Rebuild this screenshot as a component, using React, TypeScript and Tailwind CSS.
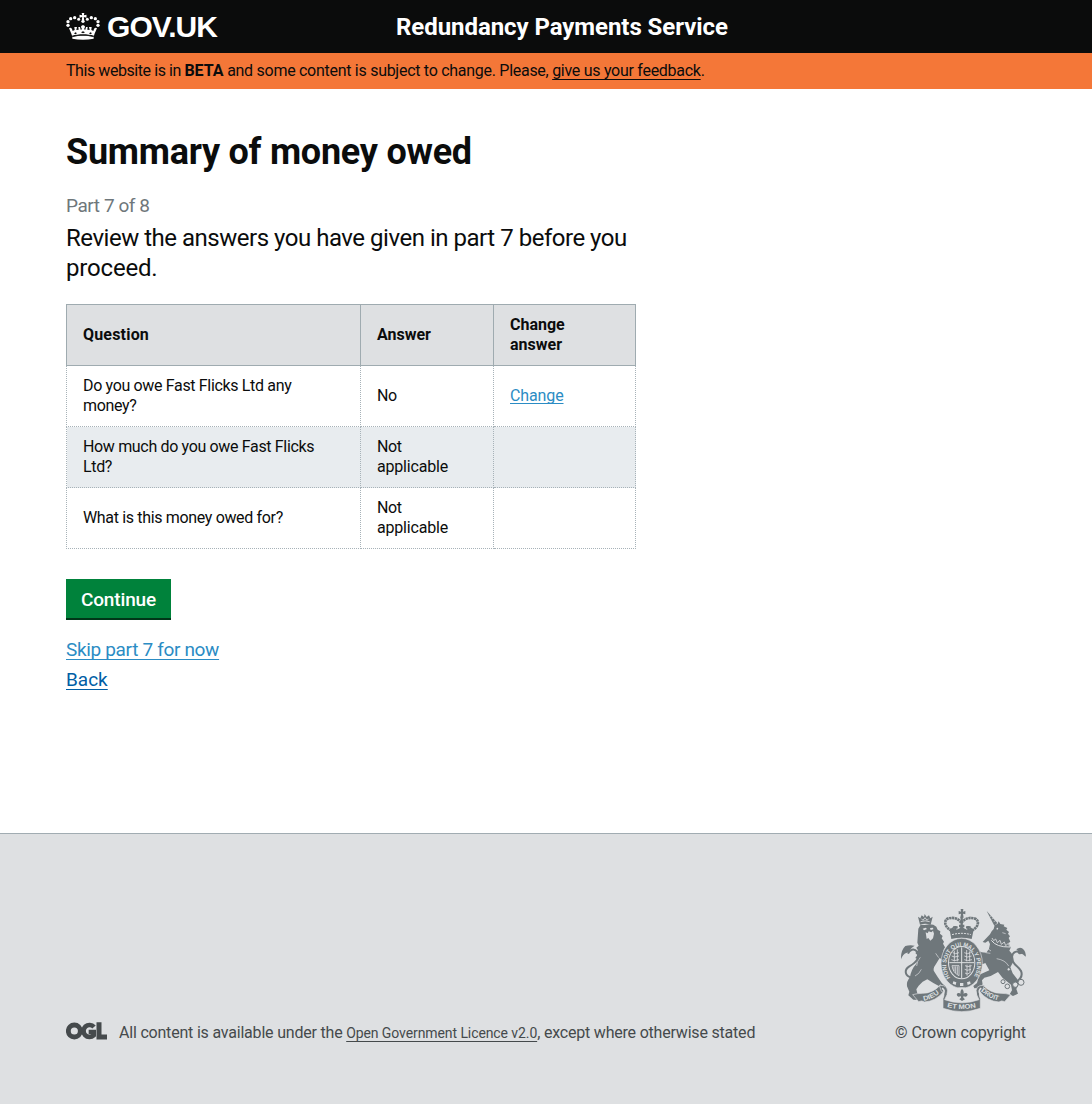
import type { ReactNode } from 'react';

function Crown() {
  return (
    <svg className="h-[27px] w-[34px]" viewBox="0 0 102 81" fill="#fff" aria-hidden="true">
      <path d="M47 0h8l-1.500 7 8-2v9l-8-2 1 9h-7l1-9-8 2V5l8 2z" />
      <circle cx="51" cy="25" r="5" />
      <circle cx="38" cy="19" r="4.500" />
      <circle cx="26" cy="14" r="5" />
      <circle cx="14" cy="17" r="5" />
      <circle cx="6" cy="26" r="5" />
      <circle cx="6" cy="37" r="5" />
      <circle cx="64" cy="19" r="4.500" />
      <circle cx="76" cy="14" r="5" />
      <circle cx="88" cy="17" r="5" />
      <circle cx="96" cy="26" r="5" />
      <circle cx="96" cy="37" r="5" />
      <path d="M9 46c3-3 7-2 9 2l2 6 6-3-1-9h8l-2 9 7-1-1-8h5l2 8 4-1-3-7c0-7 12-7 12 0l-3 7 4 1 2-8h5l-1 8 7 1-2-9h8l-1 9 6 3 2-6c2-4 6-5 9-2-3 7-7 15-9 22-20-6-46-6-66 0-2-7-6-15-9-22z" />
      <path d="M19 71c20-6 44-6 64 0v6c-20 4-44 4-64 0z" />
      <path d="M24 61l5-3 4 3-5 3zM45 58l6-3 6 3-6 3zM69 61l5-3 4 3-5 3zM20 70c20-5 42-5 62 0v2c-20-5-42-5-62 0z" fill="#0b0c0c" />
    </svg>
  );
}

function OglLogo() {
  return (
    <svg className="-mt-[5px] h-[18px] w-[41px] shrink-0" viewBox="0 0 123 54" fill="none" stroke="#454a4c" aria-hidden="true">
      <circle cx="25" cy="27" r="18" strokeWidth="14.500" />
      <path d="M84 15a18 18 0 1 0-1 25V30H68" strokeWidth="14" />
      <path d="M99 1v44h24" strokeWidth="15" />
    </svg>
  );
}

function Crest() {
  return (
    <svg className="h-[104px] w-[125px]" viewBox="33 24 375 312" fill="#6f777b" aria-hidden="true">
      {/* central crown */}
      <path d="M212 27h8l-1 8 7-2v10l-7-2 2 12h-10l2-12-7 2V33l7 2z" />
      <g fill="none" stroke="#6f777b">
        <path d="M185 92C163 82 159 58 177 55c18-4 30 3 37 14 8-11 20-18 38-14 19 4 14 28-8 37" strokeWidth="8" strokeDasharray="7 1.500" />
        <path d="M196 93V78m-7 4h14M215 94V50m-8 28h16M235 93V78m-7 4h14" strokeWidth="7" />
      </g>
      <path d="M179 89l9-7 8 9 13-6 6-8 7 8 12 6 8-9 9 7-6 28q-31-8-61 0z" />
      <path d="M186 104q29-8 57 0" fill="none" stroke="#dee0e2" strokeWidth="3" strokeDasharray="6 3" />
      {/* lion */}
      <path d="M90 74L84 50l7 5 4-9 7 5 2-9 6 9 7-5 4 9 7-5-6 24q-16-6-32 0z" />
      <path d="M92 65q13-5 27 0M94 56l5 5 6-8 6 8 5-5" fill="none" stroke="#dee0e2" strokeWidth="2.500" />
      <path d="M85 86l7-12 12 1 14-2 12 1 9 6 4 9 8 5-1 7 8 7-3 7 7 10-3 6 6 11-5 9 4 12 8 13 4 10-9 3-10-10-8-5-11 18q-12 16-4 25l9 14 13 19 12 10-3 11-19-1-1-8 3-3-18-10-18-11-14 7-12 12-7 11 4 16 15 7-1 9-27-1-15-13 3-11-7-16q-2-15 9-27 3-24 19-41l4-13-7-4 6-9-6-6 8-8-5-8 7-6-4-9z" />
      <path d="M98 86l9-3 4 4-9 4zM120 84l9-1 1 5-8 2zM107 97l6 3 3-6 8 3 5-5 3 9-3 14-8 7-6-8-5 3z" fill="#dee0e2" />
      <path d="M91 172q-10 10-11 26M137 160l9 13M94 208q-6 14-19 20" fill="none" stroke="#dee0e2" strokeWidth="2" />
      <path d="M66 233C43 228 42 209 58 199c24-13 33-30 23-44-9-12-23-5-27 6" fill="none" stroke="#6f777b" strokeWidth="6" />
      <path d="M33 178q-1-27 13-40 14-4 28-1-12 7-13 13-4 7-10 8-13 3-18 20z" />
      {/* unicorn */}
      <path d="M290 33l32 36-9 8z" />
      <path d="M299 50l6-3M305 57l6-3M311 65l6-3" stroke="#dee0e2" strokeWidth="2" />
      <path d="M300 103l5-9 6-7 3-11 9-5 3-7 5 8 12 2-2 5 11 5-3 5 8 7-3 5 6 8-4 5 5 11-5 4 6 14-4 9q15 14 12 33l-9 17 7 18 14 18 5 14-8 15 5 14-15 7-10-5 7-12-3-17-25-20-14-18-22 12-19 5-7 8 2 13-10 9-15 2-3-7 11-9 7-25 30-13-12-22-15 6-5 17-11 7-5-7 4-10 0-18 18-11-13-9-15 3-10-8 5-8 14-4 22 10 14 1 8-12 3-14-5-10-9 6-8-2z" />
      <path d="M304 121q15 21 56 20" fill="none" stroke="#dee0e2" strokeWidth="3" />
      <path d="M306 114l5 8 6-5 5 11 8-7 4 12 9-7 4 11 8-7 4 10" fill="none" stroke="#dee0e2" strokeWidth="2.500" />
      <circle cx="322" cy="86" r="2.500" fill="#dee0e2" />
      <path d="M320 176q26 4 36 22M337 98l10 3M303 153l-12-9M301 160l-14-2" fill="none" stroke="#dee0e2" strokeWidth="2" />
      <path d="M363 254c24-10 37-24 30-41-7-15-29-20-27-42 1-16 17-22 26-9" fill="none" stroke="#6f777b" strokeWidth="6" />
      <path d="M379 148q13-10 23 2 7 9 5 20-9-11-23-9 2-8-5-13z" />
      {/* garter and shield */}
      <ellipse cx="215" cy="190" rx="62" ry="75" stroke="#dee0e2" strokeWidth="2" />
      <ellipse cx="215" cy="188" rx="41" ry="50" fill="#dee0e2" />
      <ellipse cx="215" cy="188" rx="38" ry="47" />
      <path d="M215 142v92M178 188h74" stroke="#dee0e2" strokeWidth="3" />
      <g fill="none" stroke="#dee0e2" strokeWidth="2.500">
        <path d="M188 158l9 3 10-3M185 168l9 3 13-3M184 179l9 3 14-3M193 152v32M202 148v36" />
        <path d="M225 197l8 3 12-3M224 208l8 3 11-3M225 219l7 3 7-3M231 194v33M240 194v25" />
        <path d="M223 158l9 3 10-3M223 168l9 3 13-3M223 179l9 3 14-3M230 150v34M239 154v30" />
        <path d="M186 197q3 22 21 30v-30zM192 199v14M197 199v20M202 199v24" />
      </g>
      <path id="garter" d="M181 233a46 56 0 1 1 68 0" fill="none" />
      <text fill="#dee0e2" fontFamily="Liberation Sans" fontWeight="700" fontSize="18">
        <textPath href="#garter" textLength="236" lengthAdjust="spacingAndGlyphs">
          HONI SOIT QUI MAL Y PENSE
        </textPath>
      </text>
      <path d="M190 244l9 3-2 8-9-4zM210 249h10v9h-10zM231 247l9-3 2 7-9 4z" fill="#dee0e2" />
      {/* chain */}
      <g fill="#dee0e2" stroke="#6f777b" strokeWidth="3">
        <circle cx="339" cy="245" r="6" />
        <circle cx="352" cy="259" r="7" />
        <circle cx="376" cy="254" r="8" />
        <circle cx="393" cy="247" r="9" />
        <circle cx="356" cy="208" r="5" />
      </g>
      {/* motto ribbon */}
      <g stroke="#dee0e2" strokeWidth="2">
        <path d="M68 284l18 21q10-5 17 1 34-2 58-31l-9-21q-23 26-55 26-15 0-29 4z" />
        <path d="M362 284l-18 21q-10-5-17 1-34-2-58-31l9-21q23 26 55 26 15 0 29 4z" />
        <path d="M148 256q31-2 23 28l-7 15q51 19 103 0l-7-15q-8-30 23-28l-6 18q-14 3-6 22v29q-55 20-112 0v-29q8-19-5-22z" />
      </g>
      <path d="M171 284q45 18 90 0l-3-12q-43-20-84 0z" fill="#dee0e2" />
      <path d="M156 265q10 5 4 17l-4 13M274 265q-10 5-4 17l4 13" fill="none" stroke="#dee0e2" strokeWidth="5" />
      <path id="dieu" d="M101 302q30-4 55-30" fill="none" />
      <path id="droit" d="M273 272q22 25 62 31" fill="none" />
      <path id="etmon" d="M171 321q45 12 90 0" fill="none" />
      <g fill="#dee0e2" fontFamily="Liberation Sans" fontWeight="700" fontSize="20">
        <text>
          <textPath href="#dieu" textLength="53" lengthAdjust="spacingAndGlyphs">DIEU</textPath>
        </text>
        <text>
          <textPath href="#droit" textLength="60" lengthAdjust="spacingAndGlyphs">DROIT</textPath>
        </text>
        <text>
          <textPath href="#etmon" textLength="88" lengthAdjust="spacingAndGlyphs">ET MON</textPath>
        </text>
      </g>
      <path d="M216 266q10 10 1 23 3-12 12-10 8 5-1 11l-8-1v4l5 5-9 5-8-5 5-5v-4l-8 1q-9-6-1-11 9-2 11 10-8-13 1-23z" />
    </svg>
  );
}

function Cell({ children }: { children?: ReactNode }) {
  return <td className="border border-dotted border-[#a7b2b8] px-4 py-0">{children}</td>;
}

export default function App() {
  return (
    <div className="flex min-h-[1104px] flex-col bg-white font-['Roboto',sans-serif] text-[16px] leading-5 text-[#0b0c0c]">
      <header className="flex h-[53px] items-center bg-[#0b0c0c] px-[66px] text-white">
        <a className="flex w-[330px] items-center gap-[7px]">
          <Crown />
          <span className="font-['Liberation_Sans',sans-serif] text-[30px] leading-[53px] font-bold tracking-[-0.93px]">GOV.UK</span>
        </a>
        <span className="pt-px text-[24px] leading-[53px] font-bold tracking-[-0.06px]">Redundancy Payments Service</span>
      </header>
      <div className="flex h-9 items-center bg-[#f47738] px-[66px]">
        <p className="tracking-[-0.28px] whitespace-nowrap">
          <span className="tracking-[-0.43px]">This website is in </span>
          <b className="tracking-[-0.05px]">BETA</b> and some content is subject to change. Please,{' '}
          <a className="underline decoration-1 underline-offset-[3px] [text-decoration-skip-ink:none]">give us your feedback</a>.
        </p>
      </div>

      <main className="flex flex-col items-start px-[66px] pt-[43px]">
        <h1 className="text-[36px] leading-10 font-bold tracking-[-0.25px]">Summary of money owed</h1>
        <p className="mt-[21px] text-[19px] leading-[25px] tracking-[-0.43px] text-[#6f777b]">Part 7 of 8</p>
        <p className="mt-[5px] w-[580px] text-[24px] leading-[30px] tracking-[-0.48px]">
          Review the answers you have given in part 7 before you <span className="tracking-[-0.18px]">proceed.</span>
        </p>

        <table className="mt-[21px] w-[570px] table-fixed border-collapse text-left tracking-[-0.34px]">
          <colgroup>
            <col className="w-[294px]" />
            <col className="w-[133px]" />
            <col className="w-[142px]" />
          </colgroup>
          <thead>
            <tr className="h-[61px] bg-[#dee0e2] tracking-normal">
              <th className="border border-[#9fabb0] px-4 font-bold tracking-[0.19px]">Question</th>
              <th className="border border-[#9fabb0] px-4 font-bold">Answer</th>
              <th className="border border-[#9fabb0] px-4 font-bold">
                Change
                <br />
                answer
              </th>
            </tr>
          </thead>
          <tbody>
            <tr className="h-[61px]">
              <Cell>
                Do you owe Fast Flicks Ltd any
                <br />
                money?
              </Cell>
              <Cell>No</Cell>
              <Cell>
                <a className="tracking-[-0.12px] text-[#2b8cc4] underline decoration-1 underline-offset-2 [text-decoration-skip-ink:none]">Change</a>
              </Cell>
            </tr>
            <tr className="h-[61px] bg-[#e8ecef]">
              <Cell>
                How much do you owe Fast Flicks
                <br />
                Ltd?
              </Cell>
              <Cell>
                Not
                <br />
                <span className="tracking-[-0.19px]">applicable</span>
              </Cell>
              <Cell />
            </tr>
            <tr className="h-[61px]">
              <Cell>What is this money owed for?</Cell>
              <Cell>
                Not
                <br />
                <span className="tracking-[-0.19px]">applicable</span>
              </Cell>
              <Cell />
            </tr>
          </tbody>
        </table>

        <button className="mt-[30px] h-[41px] w-[105px] border-b-2 border-[#003618] bg-[#00823b] pt-0.5 text-[19px] font-medium tracking-[-0.15px] text-white">
          Continue
        </button>
        <a className="mt-[15px] text-[19px] leading-[30px] tracking-[-0.33px] text-[#2b8cc4] underline decoration-1 underline-offset-[3px] [text-decoration-skip-ink:none]">
          Skip part 7 for now
        </a>
        <a className="text-[19px] leading-[30px] text-[#005ea5] underline decoration-1 underline-offset-[3px] [text-decoration-skip-ink:none]">Back</a>
      </main>

      <footer className="mt-auto flex h-[271px] items-end justify-between border-t border-[#a1acb2] bg-[#dee0e2] px-[66px] pb-[61px] text-[#454a4c]">
        <div className="flex items-center">
          <OglLogo />
          <p className="ml-3 tracking-[-0.2px] whitespace-nowrap">
            All content is available under the{' '}
            <a className="text-[14px] tracking-[-0.09px] underline decoration-1 underline-offset-[3px] [text-decoration-skip-ink:none]">
              Open Government Licence v2.0
            </a>
            , except where otherwise stated
          </p>
        </div>
        <div className="flex flex-col items-end gap-[11px]">
          <Crest />
          <p className="tracking-[-0.09px]">© Crown copyright</p>
        </div>
      </footer>
    </div>
  );
}
